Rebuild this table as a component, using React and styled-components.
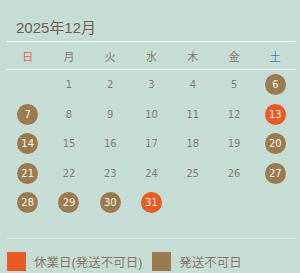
import styled, { createGlobalStyle } from "styled-components";

const GlobalStyle = createGlobalStyle`
  body {
    margin: 0;
    background-color: #c6ddd5;
    font-family: "Liberation Sans", "Noto Sans CJK JP", sans-serif;
  }
`;

const weekdays = ["日", "月", "火", "水", "木", "金", "土"];
const closed = [13, 31];
const noShip = [6, 7, 14, 20, 21, 27, 28, 29, 30];

export default function App() {
  // December 2025 starts on a Monday
  const cells = [null];
  for (let d = 1; d <= 31; d++) cells.push(d);

  return (
    <>
      <GlobalStyle />
      <Wrapper>
        <Title>2025年12月</Title>
        <HeaderRow>
          {weekdays.map((w, i) => (
            <HeaderCell key={w} $day={i}>
              {w}
            </HeaderCell>
          ))}
        </HeaderRow>
        <DaysGrid>
          {cells.map((d, i) => (
            <DayCell key={i}>
              {d && (
                <DayNumber
                  $kind={
                    closed.includes(d)
                      ? "closed"
                      : noShip.includes(d)
                      ? "noship"
                      : "normal"
                  }
                >
                  {d}
                </DayNumber>
              )}
            </DayCell>
          ))}
        </DaysGrid>
        <Legend>
          <LegendItem>
            <Swatch $color="#e95a24" />
            休業日(発送不可日)
          </LegendItem>
          <LegendItem>
            <Swatch $color="#9b7a50" />
            発送不可日
          </LegendItem>
        </Legend>
      </Wrapper>
    </>
  );
}

const Wrapper = styled.div`
  width: 289px;
  padding: 0 4px 0 7px;
`;

const Title = styled.h2`
  margin: 0;
  height: 42px;
  box-sizing: border-box;
  padding: 16px 0 0 9px;
  font-size: 15px;
  font-weight: normal;
  color: #6e5e50;
  border-bottom: 1px solid #f6faf8;
`;

const HeaderRow = styled.div`
  display: grid;
  grid-template-columns: repeat(7, 1fr);
  height: 27px;
  align-items: center;
  border-bottom: 1px solid #f6faf8;
`;

const headerColor = (day) =>
  day === 0 ? "#e65a5e" : day === 6 ? "#2f86c8" : "#857a70";

const HeaderCell = styled.div`
  text-align: center;
  font-size: 11px;
  color: ${({ $day }) => headerColor($day)};
`;

const DaysGrid = styled.div`
  display: grid;
  grid-template-columns: repeat(7, 1fr);
  grid-auto-rows: 29.5px;
  padding-bottom: 20px;
  border-bottom: 1px solid #dbe9e4;
`;

const DayCell = styled.div`
  display: flex;
  align-items: center;
  justify-content: center;
`;

const circleColor = {
  closed: "#e95a24",
  noship: "#9b7a50",
  normal: "transparent",
};

const DayNumber = styled.span`
  width: 21px;
  height: 21px;
  border-radius: 50%;
  display: flex;
  align-items: center;
  justify-content: center;
  font-family: "DejaVu Sans Condensed", "Liberation Sans", sans-serif;
  font-size: 11px;
  color: ${({ $kind }) => ($kind === "normal" ? "#857a70" : "#fbf6ee")};
  background-color: ${({ $kind }) => circleColor[$kind]};
`;

const Legend = styled.div`
  display: flex;
  gap: 10px;
  padding-top: 13px;
`;

const LegendItem = styled.div`
  display: flex;
  align-items: center;
  gap: 8px;
  font-size: 12.5px;
  color: #867868;
`;

const Swatch = styled.span`
  width: 19px;
  height: 19px;
  background-color: ${({ $color }) => $color};
`;
